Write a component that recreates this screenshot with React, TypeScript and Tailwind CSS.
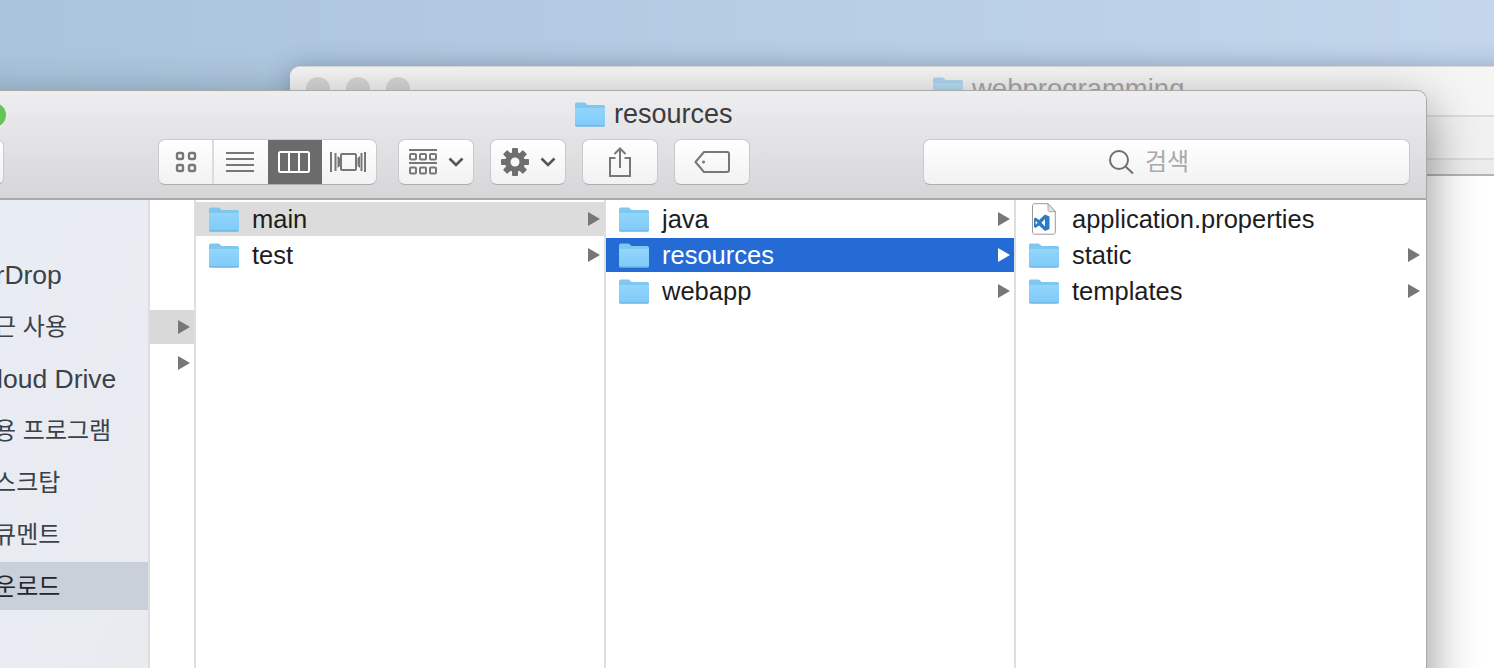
import type { ReactNode } from "react";

const FONT = "font-['Liberation_Sans','Noto_Sans_CJK_KR',sans-serif]";

const SIDEBAR = [
  { label: "AirDrop", ko: false },
  { label: "최근 사용", ko: true },
  { label: "iCloud Drive", ko: false },
  { label: "응용 프로그램", ko: true },
  { label: "데스크탑", ko: true },
  { label: "도큐멘트", ko: true },
  { label: "다운로드", ko: true, active: true },
];

function Folder({ className = "" }: { className?: string }) {
  return (
    <svg width="30" height="25" viewBox="0 0 30 25" className={`shrink-0 ${className}`}>
      <defs>
        <linearGradient id="folderBody" x1="0" y1="0" x2="0" y2="1">
          <stop offset="0" stopColor="#93d5fb" />
          <stop offset="1" stopColor="#7ecbf9" />
        </linearGradient>
      </defs>
      <path d="M0 2.500C0 1 .8.500 2 .500h7c1 0 1.500.5 2.500 1.500l1 1H28c1.300 0 2 .7 2 2v17c0 1.300-.7 2-2 2H2c-1.300 0-2-.7-2-2z" fill="#7fc6f0" />
      <path d="M0 6h30v16.500c0 1-.6 1.500-1.600 1.500H1.600C.6 24 0 23.500 0 22.500z" fill="url(#folderBody)" />
      <path d="M0 23.300h30c0 1-.7 1.400-1.700 1.400H1.700C.7 24.700 0 24.300 0 23.300z" fill="#6fb5e2" />
    </svg>
  );
}

function VsFile() {
  return (
    <svg width="24" height="32" viewBox="0 0 24 32" className="shrink-0">
      <path d="M2.500.7h13.500l7.300 7.500v21c0 1.200-.8 2-2 2H2.500c-1.200 0-2-.8-2-2V2.700c0-1.200.8-2 2-2z" fill="#fff" stroke="#9a9a9a" />
      <path d="M16 .7v6c0 1.200.8 2 2 2h5.300z" fill="#e4e4e4" stroke="#9a9a9a" strokeWidth=".8" />
      <path d="M13 11.500l4.500 2V26L13 28l-6-5.500L3.500 25 2 24v-8.500l1.500-1L7 17zM13 16l-3.500 3.800 3.500 3.700zM3.600 17.800v4l2-2z" fill="#2c7cc4" fillRule="evenodd" />
    </svg>
  );
}

function Arrow({ white = false }: { white?: boolean }) {
  return (
    <svg width="12" height="14" viewBox="0 0 12 14" className="shrink-0">
      <path d="M0 0l12 7-12 7z" fill={white ? "#ffffff" : "#777777"} />
    </svg>
  );
}

function Row({
  name,
  icon,
  arrow = true,
  state,
}: {
  name: string;
  icon?: ReactNode;
  arrow?: boolean;
  state?: "gray" | "blue";
}) {
  const bg = state === "blue" ? "bg-[#246bd5] text-white" : state === "gray" ? "bg-[#dcdcdc] text-[#1d1d1f]" : "text-[#1d1d1f]";
  return (
    <div className={`flex h-[34px] items-center pl-[13px] pr-[4px] ${bg}`}>
      {icon ?? <Folder />}
      <span className="ml-[13px] mt-[2px] flex-1 text-[25.5px] leading-none">{name}</span>
      {arrow && <Arrow white={state === "blue"} />}
    </div>
  );
}

function Btn({ width, children, className = "" }: { width: string; children: ReactNode; className?: string }) {
  return (
    <div
      className={`flex h-[46px] items-center justify-center rounded-[7px] border border-[#cbc9cb] border-b-[#aeacae] bg-gradient-to-b from-[#ffffff] to-[#f2f2f2] ${width} ${className}`}
    >
      {children}
    </div>
  );
}

function Chevron() {
  return (
    <svg width="16" height="10" viewBox="0 0 16 10">
      <path d="M1.500 1.500L8 8l6.500-6.500" fill="none" stroke="#555555" strokeWidth="2.600" />
    </svg>
  );
}

function ViewSwitcher() {
  return (
    <div className="ml-[154px] flex h-[46px] w-[219px] overflow-hidden rounded-[7px] border border-[#cbc9cb] border-b-[#aeacae] bg-gradient-to-b from-[#ffffff] to-[#f2f2f2]">
      <div className="flex w-[55px] items-center justify-center border-r-2 border-[#dcdcdc]">
        <svg width="22" height="22" viewBox="0 0 22 22" fill="none" stroke="#777777" strokeWidth="2.400">
          <rect x="2" y="2" width="6" height="6" rx="1.500" />
          <rect x="14" y="2" width="6" height="6" rx="1.500" />
          <rect x="2" y="14" width="6" height="6" rx="1.500" />
          <rect x="14" y="14" width="6" height="6" rx="1.500" />
        </svg>
      </div>
      <div className="flex w-[54px] items-center justify-center pr-[2px]">
        <svg width="28" height="20" viewBox="0 0 28 20" stroke="#777777" strokeWidth="2">
          <path d="M0 1h28M0 7h28M0 13h28M0 19h28" />
        </svg>
      </div>
      <div className="flex w-[54px] items-center justify-center bg-[#6b6b6b] pr-[2px]">
        <svg width="32" height="22" viewBox="0 0 32 22" fill="none" stroke="#ffffff" strokeWidth="2">
          <rect x="1" y="1" width="30" height="20" rx="1.500" />
          <path d="M11 1v20M21 1v20" />
        </svg>
      </div>
      <div className="flex flex-1 items-center justify-center pr-[2px]">
        <svg width="36" height="22" viewBox="0 0 36 22" fill="none" stroke="#777777" strokeWidth="2">
          <path d="M1 1v20M5.500 2v18" />
          <path d="M7.500 5l2.500 2v8l-2.500 2z" fill="#777777" stroke="none" />
          <rect x="11" y="3" width="15" height="16" rx="1" />
          <path d="M30 5l-2.500 2v8l2.500 2z" fill="#777777" stroke="none" />
          <path d="M31.500 2v18M35 1v20" />
        </svg>
      </div>
    </div>
  );
}

function ArrangeIcon() {
  return (
    <svg width="28" height="26" viewBox="0 0 28 26" fill="none" stroke="#777777" strokeWidth="2">
      <path d="M0 1h28M0 14h28" />
      <rect x="1" y="5" width="6" height="5.500" rx="1" />
      <rect x="11" y="5" width="6" height="5.500" rx="1" />
      <rect x="21" y="5" width="6" height="5.500" rx="1" />
      <rect x="1" y="18.500" width="6" height="6" rx="1" />
      <rect x="11" y="18.500" width="6" height="6" rx="1" />
      <rect x="21" y="18.500" width="6" height="6" rx="1" />
    </svg>
  );
}

function GearIcon() {
  const teeth = [0, 45, 90, 135];
  return (
    <svg width="28" height="28" viewBox="0 0 28 28">
      {teeth.map((a) => (
        <rect key={a} x="11" y="0" width="6" height="28" rx="1" fill="#6f6f6f" transform={`rotate(${a} 14 14)`} />
      ))}
      <circle cx="14" cy="14" r="10" fill="#6f6f6f" />
      <circle cx="14" cy="14" r="4.500" fill="#f8f8f8" />
    </svg>
  );
}

function ShareIcon() {
  return (
    <svg width="24" height="30" viewBox="0 0 24 30" fill="none" stroke="#777777" strokeWidth="2">
      <path d="M7.500 11H2v18h20V11h-5.500" />
      <path d="M12 21V2M6.500 7L12 1.500 17.500 7" />
    </svg>
  );
}

function TagIcon() {
  return (
    <svg width="36" height="22" viewBox="0 0 36 22" fill="none" stroke="#777777" strokeWidth="2">
      <path d="M10 1h23c1.200 0 2 .8 2 2v16c0 1.200-.8 2-2 2H10L1.500 11z" strokeLinejoin="round" />
      <circle cx="9.500" cy="11" r="1.500" fill="#777777" stroke="none" />
    </svg>
  );
}

function SearchIcon() {
  return (
    <svg width="25" height="24" viewBox="0 0 25 24" fill="none" stroke="#6f6f6f" strokeWidth="2">
      <circle cx="10" cy="10" r="9" />
      <path d="M16.500 16.500L24 23.500" />
    </svg>
  );
}

function BackWindow() {
  return (
    <div className="absolute left-[290px] top-[66px] h-[640px] w-[1300px] overflow-hidden rounded-t-[10px] border-t border-[#d8d8d8] bg-white shadow-[0_0_24px_rgba(40,60,90,0.3)]">
      <div className="h-[50px] border-b-2 border-[#dcdcdc] bg-[#f5f5f5]">
        <div className="flex h-[44px] items-center">
          <span className="ml-[16px] h-[24px] w-[24px] rounded-full bg-[#d9d7d7]" />
          <span className="ml-[16px] h-[24px] w-[24px] rounded-full bg-[#d9d7d7]" />
          <span className="ml-[16px] h-[24px] w-[24px] rounded-full bg-[#d9d7d7]" />
          <Folder className="ml-[523px] opacity-60" />
          <span className="ml-[9px] text-[27.5px] text-[#a9a9a9]">webprogramming</span>
        </div>
      </div>
      <div className="h-[43px] border-b-2 border-[#dcdcdc] bg-[#f1f1f1]" />
      <div className="h-[16px] border-b-2 border-[#b4b4b4] bg-[#ececec]" />
    </div>
  );
}

function FrontWindow() {
  return (
    <div className="absolute left-[-100px] top-[90px] flex h-[640px] w-[1527px] flex-col overflow-hidden rounded-t-[10px] border border-b-0 border-[#a9a9a9] bg-white shadow-[0_16px_50px_rgba(0,0,0,0.45)]">
      <div className="h-[109px] shrink-0 border-b-2 border-[#a8a8a8] bg-gradient-to-b from-[#eeedef] to-[#d6d5d7]">
        <div className="flex h-[47px] items-center">
          <span className="ml-[81px] h-[24px] w-[24px] rounded-full bg-[#62c554]" />
          <Folder className="ml-[569px]" />
          <span className="ml-[9px] text-[27px] leading-none text-[#3b3b3d]">resources</span>
        </div>
        <div className="mt-[1px] flex">
          <Btn width="w-[64px]" className="ml-[39px]">
            <span />
          </Btn>
          <ViewSwitcher />
          <Btn width="w-[76px]" className="ml-[21px] gap-[11px]">
            <ArrangeIcon />
            <Chevron />
          </Btn>
          <Btn width="w-[76px]" className="ml-[16px] gap-[11px]">
            <GearIcon />
            <Chevron />
          </Btn>
          <Btn width="w-[76px]" className="ml-[16px]">
            <ShareIcon />
          </Btn>
          <Btn width="w-[76px]" className="ml-[16px]">
            <TagIcon />
          </Btn>
          <Btn width="w-[487px]" className="ml-[173px] !justify-start pl-[185px]">
            <SearchIcon />
            <span className="ml-[11px] text-[24px] leading-none text-[#a9a9a9]">검색</span>
          </Btn>
        </div>
      </div>
      <div className="flex flex-1">
        <div className="w-[247px] shrink-0 bg-gradient-to-br from-[#e8edf5] to-[#e9ebef] pt-[50px]">
          <div className="flex flex-col gap-[4px]">
            {SIDEBAR.map((item) => (
              <div
                key={item.label}
                className={`flex h-[48px] items-center pl-[71px] leading-none ${item.active ? "bg-[#c9d0da] text-[#23272d]" : "text-[#3c4148]"}`}
              >
                <span className={item.ko ? "mt-[2px] whitespace-nowrap text-[24px]" : "mt-[2px] whitespace-nowrap text-[26.5px]"}>{item.label}</span>
              </div>
            ))}
          </div>
        </div>
        <div className="w-[48px] shrink-0 border-x-2 border-[#dedede] pt-[110px]">
          <div className="flex h-[34px] items-center justify-end bg-[#d9d9d9] pr-[4px]">
            <Arrow />
          </div>
          <div className="mt-[2px] flex h-[34px] items-center justify-end pr-[4px]">
            <Arrow />
          </div>
        </div>
        <div className="w-[410px] shrink-0 border-r-2 border-[#dedede] pt-[2px]">
          <div className="flex flex-col gap-[2px]">
            <Row name="main" state="gray" />
            <Row name="test" />
          </div>
        </div>
        <div className="w-[410px] shrink-0 border-r-2 border-[#dedede] pt-[2px]">
          <div className="flex flex-col gap-[2px]">
            <Row name="java" />
            <Row name="resources" state="blue" />
            <Row name="webapp" />
          </div>
        </div>
        <div className="flex-1 pr-[2px] pt-[2px]">
          <div className="flex flex-col gap-[2px]">
            <Row
              name="application.properties"
              arrow={false}
              icon={
                <span className="flex w-[30px] justify-center">
                  <VsFile />
                </span>
              }
            />
            <Row name="static" />
            <Row name="templates" />
          </div>
        </div>
      </div>
    </div>
  );
}

export default function App() {
  return (
    <div className={`relative h-[668px] w-[1494px] overflow-hidden bg-gradient-to-r from-[#a9c4dc] to-[#c3d6ec] ${FONT}`}>
      <BackWindow />
      <FrontWindow />
    </div>
  );
}
